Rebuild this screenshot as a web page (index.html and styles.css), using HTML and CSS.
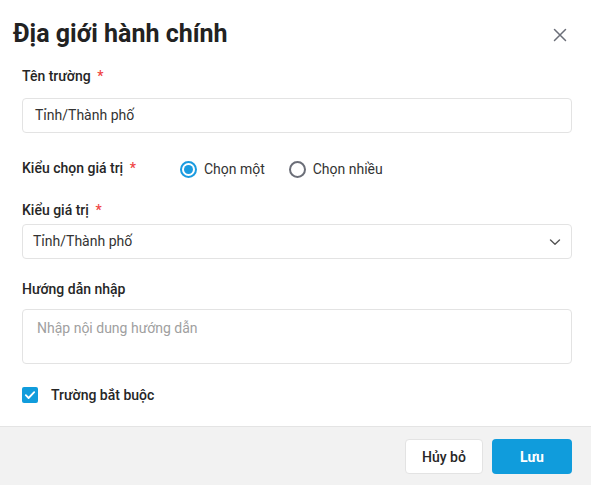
FILE: index.html
```html
<!DOCTYPE html>
<html lang="vi">
<head>
<meta charset="utf-8">
<title>Địa giới hành chính</title>
<link rel="stylesheet" href="styles.css">
</head>
<body>
<div class="dialog">
  <header class="head">
    <h1 class="title">Địa giới hành chính</h1>
    <button class="close" aria-label="Đóng">
      <svg width="14" height="14" viewBox="0 0 14 14"><path d="M1.5 1.5L12.5 12.5M12.5 1.5L1.5 12.5" stroke="#6b6e78" stroke-width="1.5" stroke-linecap="round" fill="none"/></svg>
    </button>
  </header>
  <main class="body">
    <div class="label l1">Tên trường <span class="req">*</span></div>
    <div class="input i1">Tỉnh/Thành phố</div>

    <div class="radio-row">
      <div class="label">Kiểu chọn giá trị <span class="req">*</span></div>
      <div class="radios">
        <span class="radio checked"></span><span class="rtext">Chọn một</span>
        <span class="radio"></span><span class="rtext">Chọn nhiều</span>
      </div>
    </div>

    <div class="label l3">Kiểu giá trị <span class="req">*</span></div>
    <div class="input select">
      <span>Tỉnh/Thành phố</span>
      <svg width="12" height="8" viewBox="0 0 12 8"><path d="M1.5 2l4.5 4.2L10.5 2" stroke="#555" stroke-width="1.4" fill="none" stroke-linecap="round" stroke-linejoin="round"/></svg>
    </div>

    <div class="label l4">Hướng dẫn nhập</div>
    <div class="textarea">Nhập nội dung hướng dẫn</div>

    <div class="check-row">
      <span class="checkbox"><svg width="16" height="16" viewBox="0 0 16 16"><path d="M3.8 8.2l2.8 2.8 5.6-5.8" stroke="#fff" stroke-width="1.8" fill="none" stroke-linecap="round" stroke-linejoin="round"/></svg></span>
      <span class="check-text">Trường bắt buộc</span>
    </div>
  </main>
  <footer class="foot">
    <button class="btn cancel">Hủy bỏ</button>
    <button class="btn save">Lưu</button>
  </footer>
</div>
</body>
</html>
```

FILE: styles.css
```css
* { box-sizing: border-box; }
html, body { margin: 0; padding: 0; background: #fff; }
body { font-family: Roboto, "Noto Sans", Arial, sans-serif; color: #262626; }

.dialog {
  width: 591px;
  height: 485px;
  display: flex;
  flex-direction: column;
  background: #fff;
}

.head {
  display: flex;
  align-items: center;
  justify-content: space-between;
  padding: 18px 24px 0 13px;
  height: 50px;
}
.title {
  margin: 0;
  font-size: 25px;
  line-height: 32px;
  font-weight: 700;
  color: #222;
}
.close {
  border: 0;
  background: none;
  padding: 0;
  width: 14px;
  height: 14px;
  display: flex;
  margin-top: 1px;
}

.body {
  flex: 1;
  padding: 0 19px 0 22px;
  display: flex;
  flex-direction: column;
}

.label {
  font-size: 14px;
  line-height: 20px;
  font-weight: 500;
  color: #262626;
}
.req { color: #ef4444; margin-left: 3px; }
.l1 { margin-top: 16px; }
.l3 { margin-top: 22px; }
.l4 { margin-top: 20px; }

.input {
  height: 35px;
  border: 1px solid #e3e3e3;
  border-radius: 4px;
  font-size: 14px;
  line-height: 33px;
  color: #333;
  padding: 0 12px;
}
.i1 { margin-top: 12px; }
.select {
  margin-top: 4px;
  padding: 0 10px 0 10px;
  display: flex;
  align-items: center;
  justify-content: space-between;
}

.radio-row {
  margin-top: 25px;
  height: 20px;
  display: flex;
  align-items: center;
}
.radios {
  margin-left: 44px;
  display: flex;
  align-items: center;
  padding-top: 2px;
}
.radio {
  width: 17px;
  height: 17px;
  border-radius: 50%;
  border: 2px solid #6b6e78;
  display: inline-flex;
  align-items: center;
  justify-content: center;
}
.radio.checked { border-color: #1a9be0; }
.radio.checked::after {
  content: "";
  width: 9px;
  height: 9px;
  border-radius: 50%;
  background: #1a9be0;
}
.rtext {
  font-size: 14px;
  color: #333;
  margin-left: 7px;
  margin-right: 24px;
}

.textarea {
  margin-top: 10px;
  height: 55px;
  border: 1px solid #e3e3e3;
  border-radius: 4px;
  font-size: 14px;
  line-height: 20px;
  color: #a0a0a0;
  padding: 8px 14px;
}

.check-row {
  margin-top: 21px;
  height: 20px;
  display: flex;
  align-items: center;
}
.checkbox {
  width: 16px;
  height: 16px;
  border-radius: 2px;
  background: #109cdc;
  display: flex;
}
.check-text {
  margin-left: 13px;
  font-size: 14px;
  font-weight: 500;
  color: #262626;
}

.foot {
  height: 59px;
  border-top: 1px solid #e4e4e4;
  background: #f2f2f2;
  display: flex;
  justify-content: flex-end;
  align-items: flex-start;
  gap: 9px;
  padding: 12px 19px 0 0;
}
.btn {
  height: 35px;
  border-radius: 4px;
  font-family: Roboto, "Noto Sans", Arial, sans-serif;
  font-size: 14px;
  cursor: pointer;
}
.cancel {
  width: 78px;
  background: #fff;
  border: 1px solid #e3e3e3;
  color: #262626;
  font-weight: 500;
}
.save {
  width: 80px;
  background: #109cdc;
  border: 0;
  color: #fff;
  font-weight: 700;
}
```
